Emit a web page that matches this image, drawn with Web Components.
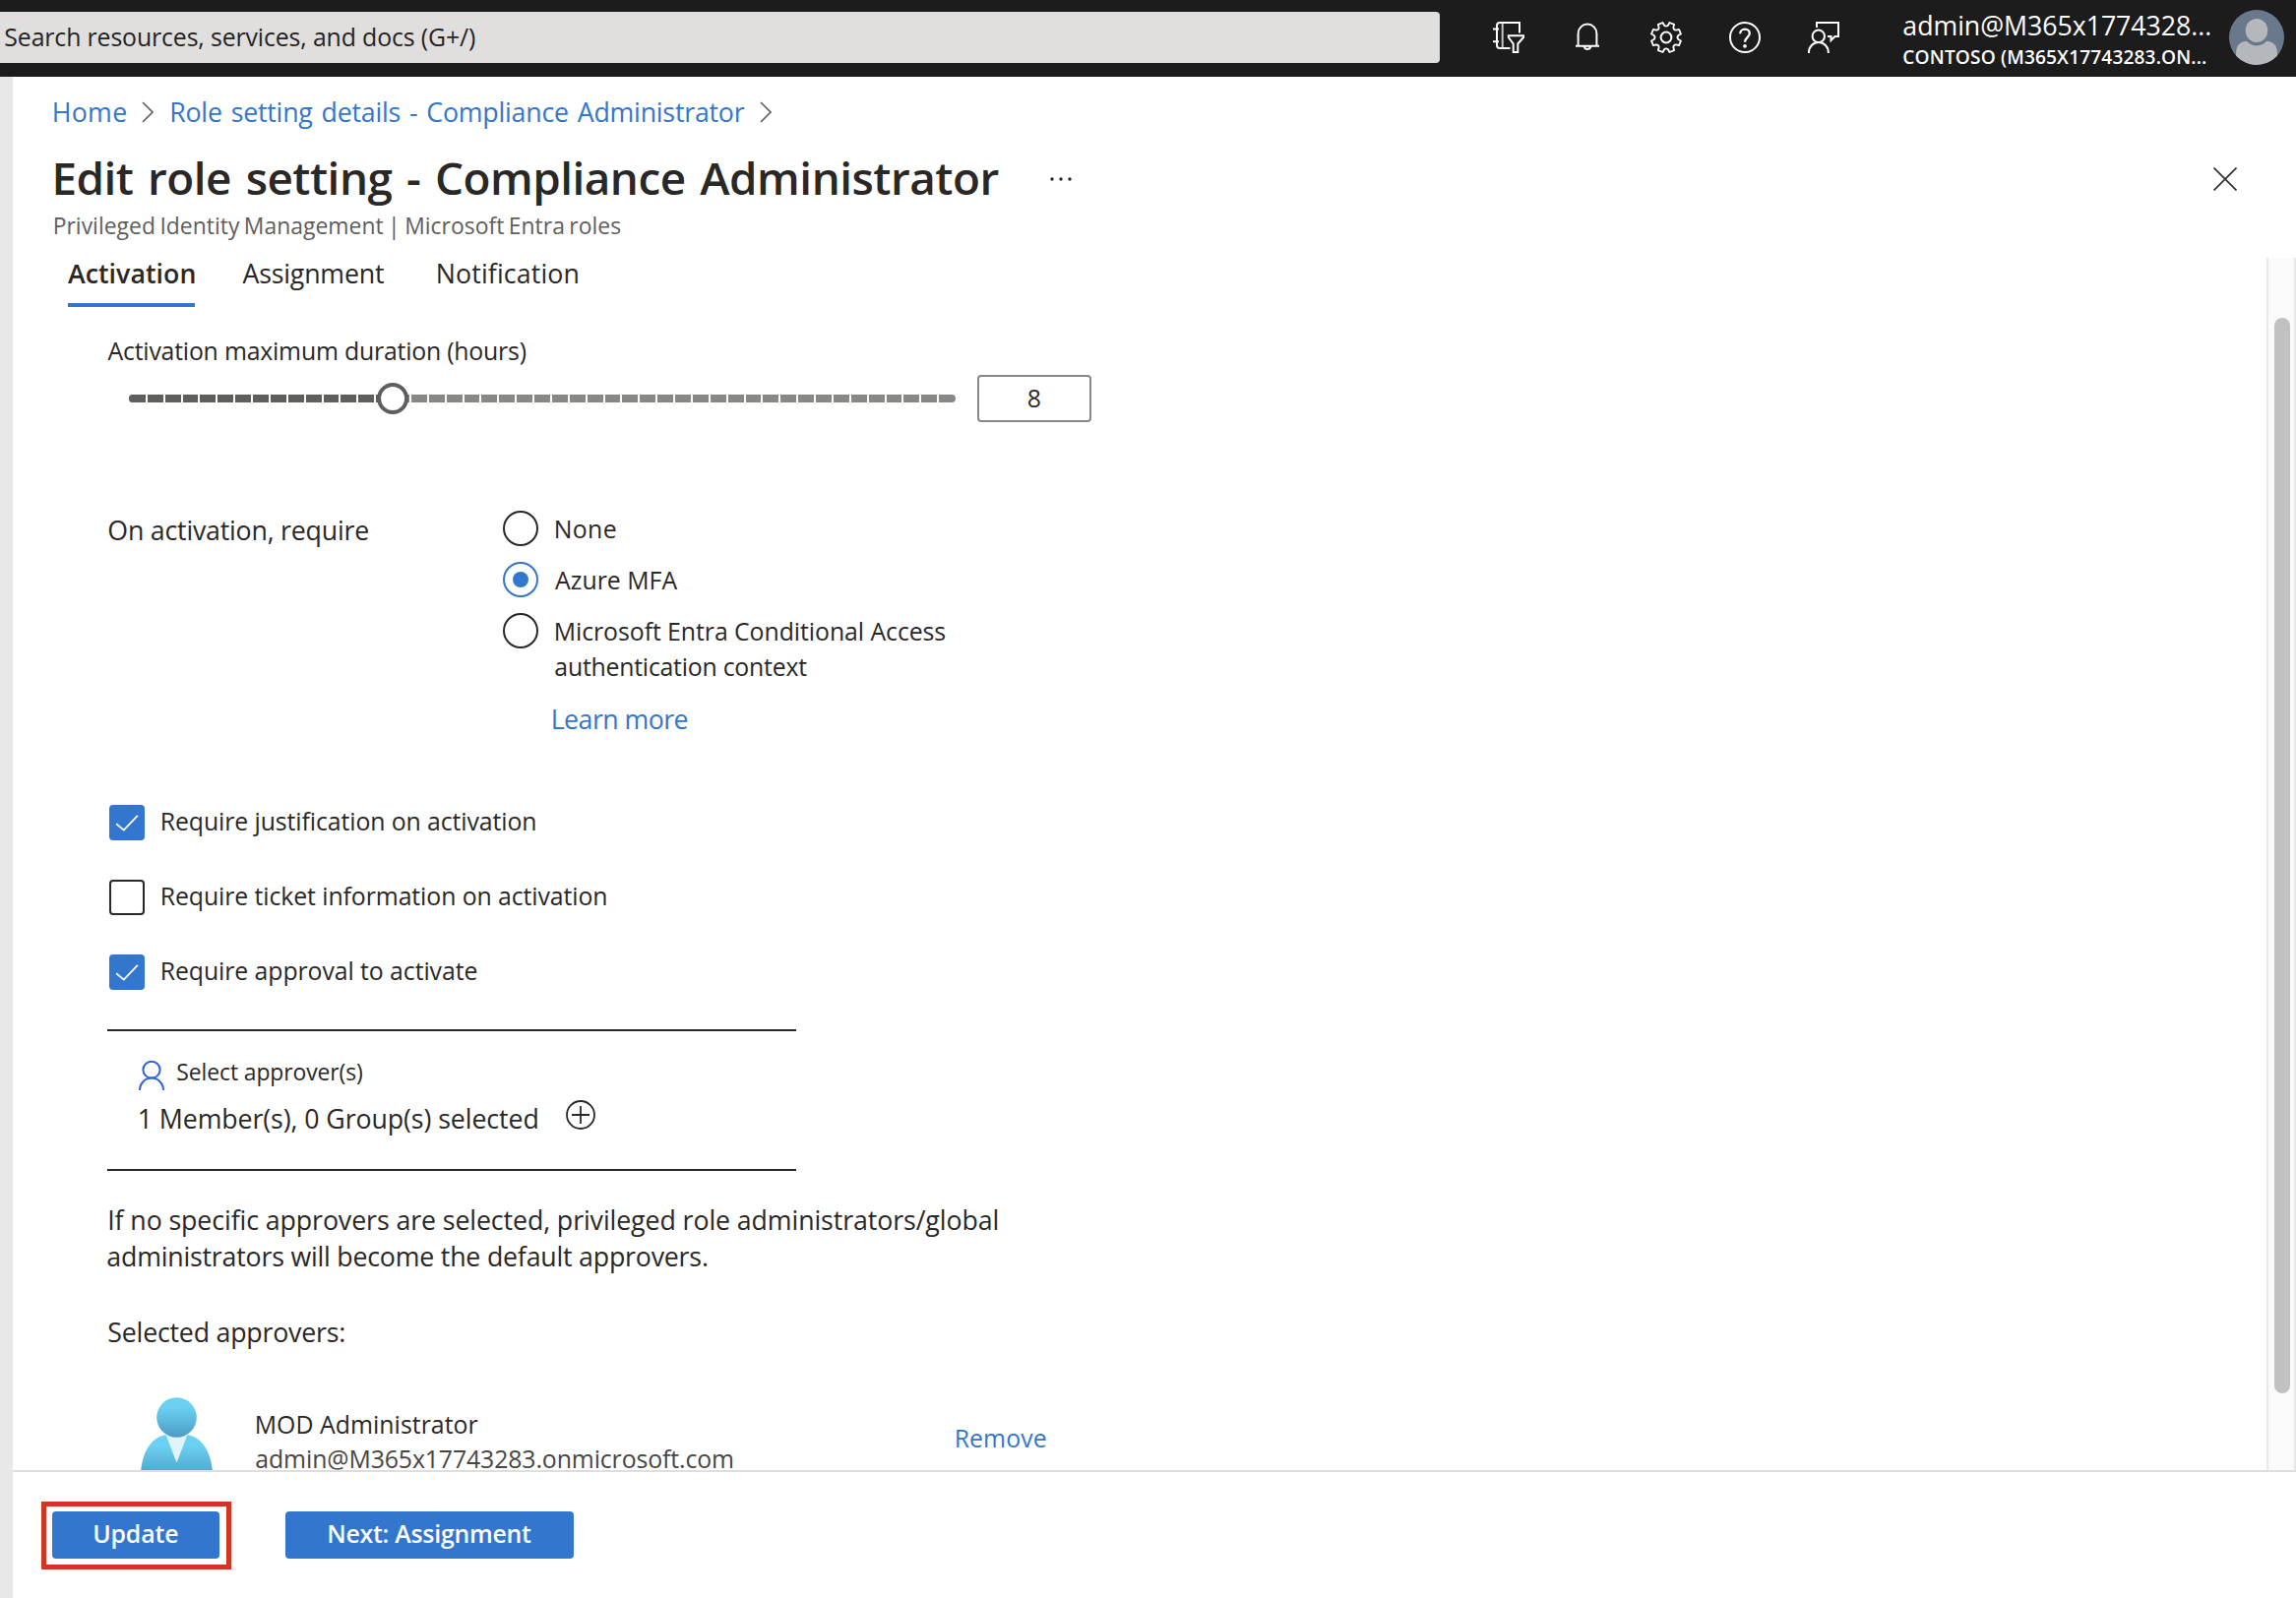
<!DOCTYPE html>
<html lang="en">
<head>
<meta charset="utf-8">
<title>Edit role setting - Compliance Administrator</title>
<style>
html,body{margin:0;padding:0;background:#fff}
body{width:2333px;height:1624px;overflow:hidden;font-family:"Open Sans","Noto Sans",sans-serif;color:#292827}
</style>
</head>
<body>
<role-settings-page></role-settings-page>
<script>
const define = (name, html, init) => {
  const tpl = document.createElement('template');
  tpl.innerHTML = html;
  customElements.define(name, class extends HTMLElement {
    connectedCallback() {
      if (this.shadowRoot) return;
      const root = this.attachShadow({ mode: 'open' });
      root.appendChild(tpl.content.cloneNode(true));
      if (init) init(this, root);
    }
  });
};

/* A line of text set to an exact ink width: s = size, w = width, h = line height, b = weight, ws = extra word space */
const pen = document.createElement('canvas').getContext('2d');
define('fit-text', `<style>:host{display:block;white-space:pre;flex:none}span{display:block}</style><span><slot></slot></span>`, (el, root) => {
  const size = (+el.getAttribute('s') * 0.955).toFixed(2);
  const weight = el.getAttribute('b') || 400;
  const w = +el.getAttribute('w');
  const ws = +(el.getAttribute('ws') || 0);
  const text = el.textContent;
  const spaces = text.split(' ').length - 1;
  pen.font = `${weight} ${size}px "Open Sans","Noto Sans",sans-serif`;
  pen.letterSpacing = '0.01px';
  const m = pen.measureText(text);
  const ink = m.actualBoundingBoxLeft + m.actualBoundingBoxRight;
  const ls = text.length > 1 ? (w - ink - ws * spaces) / (text.length - 1) : 0;
  el.style.width = w + 'px';
  const span = root.querySelector('span');
  span.style.cssText = `font-size:${size}px;font-weight:${weight};line-height:${el.getAttribute('h') || 40}px;letter-spacing:${ls.toFixed(4)}px;word-spacing:${ws}px;margin-left:${(m.actualBoundingBoxLeft * 0.65).toFixed(2)}px`;
});

const polar = (r, deg) => {
  const a = deg * Math.PI / 180;
  return (16 + r * Math.sin(a)).toFixed(2) + ' ' + (16 - r * Math.cos(a)).toFixed(2);
};
let gear = '';
for (let a = 0; a < 360; a += 45) {
  gear += `${a ? 'L' : 'M'}${polar(15.4, a - 13)}L${polar(12.4, a - 9)}Q${polar(10.6, a)} ${polar(12.4, a + 9)}L${polar(15.4, a + 13)}L${polar(15.4, a + 32)}`;
}
const ICONS = {
  filter: '<path d="M27 11.5V1H7Q4 1 4 4V24Q4 27 7 27H17.5M0 7.5H6M0 20.2H6"/><path d="M9.7 1V27" opacity=".75"/><path d="M15.8 14.3H31V16L25.3 22.5V31H20.7V22.5L15.8 16Z"/>',
  bell: '<path d="M4 24.8H28M6.6 24.8V12A9.4 9.4 0 0 1 25.4 12V24.8M12.8 25.5A3.3 3.3 0 0 0 19.2 25.5"/>',
  gear: `<path d="${gear}Z" stroke-linejoin="round" stroke-width="1.8"/><circle cx="16" cy="16" r="5.4"/>`,
  help: '<circle cx="16" cy="16" r="15"/><path d="M11.2 12.3C11.2 9.6 13.2 7.7 16 7.7S20.8 9.6 20.8 12.1C20.8 15.6 16 16.3 16 20.8" stroke-width="2.3"/><circle cx="16" cy="24.8" r="1.9" fill="currentColor" stroke="none"/>',
  feedback: '<circle cx="10.8" cy="14.8" r="6.2"/><path d="M1 32V31A9.9 10 0 0 1 20.8 31V32M9 6V1H31V15H27.5L23.5 19V15H20"/>'
};
define('portal-icon', `<style>:host{display:block;width:32px;height:32px;color:#fff;flex:none}svg{display:block;overflow:visible}</style>
<svg width="32" height="32" fill="none" stroke="currentColor" stroke-width="2"></svg>`, (el, root) => {
  root.querySelector('svg').innerHTML = ICONS[el.getAttribute('name')];
});

define('portal-header', `<style>
:host{display:flex;height:78px;background:#1c1c1c;color:#fff;flex:none}
.search{width:1463px;height:52px;margin-top:12px;box-sizing:border-box;padding-left:5px;background:#e0dfdd;color:#252423;border-radius:0 4px 4px 0}
.icons{display:flex;gap:48px;margin:22px 65px 0 54px}
.who{padding-top:6px;width:331px}
svg{display:block;margin-top:10px}
</style>
<div class="search"><fit-text s="26" w="478" h="50">Search resources, services, and docs (G+/)</fit-text></div>
<div class="icons"><portal-icon name="filter"></portal-icon><portal-icon name="bell"></portal-icon><portal-icon name="gear"></portal-icon><portal-icon name="help"></portal-icon><portal-icon name="feedback"></portal-icon></div>
<div class="who"><fit-text s="28" w="312" h="40">admin@M365x1774328...</fit-text><fit-text style="margin-top:-2px" s="20" w="307" h="28" b="600">CONTOSO (M365X17743283.ON...</fit-text></div>
<svg width="56" height="56"><defs><clipPath id="c"><circle cx="28" cy="28" r="28"/></clipPath></defs><g clip-path="url(#c)"><rect width="56" height="56" fill="#69788a"/><path d="M7 56V45Q7 33 16 32H40Q49 33 49 45V56Z" fill="#b4b8bd"/><ellipse cx="28" cy="21.5" rx="14" ry="15" fill="#69788a"/><ellipse cx="28" cy="21" rx="11.3" ry="12" fill="#b4b8bd"/></g></svg>`);

define('crumb-trail', `<style>:host{display:flex;align-items:center;color:#3376cd}svg{display:block;flex:none}</style>
<fit-text s="28" w="73.5">Home</fit-text>
<svg width="12" height="22" style="margin:0 18px 0 16px" fill="none" stroke="#605e5c" stroke-width="1.6"><path d="M1 1L11 11L1 21"/></svg>
<fit-text s="28" w="583" ws="2.2">Role setting details - Compliance Administrator</fit-text>
<svg width="12" height="22" style="margin:0 15px" fill="none" stroke="#605e5c" stroke-width="1.6"><path d="M1 1L11 11L1 21"/></svg>`);

define('blade-title', `<style>
:host{display:block}
.row{display:flex;align-items:center}
.dots{margin:4px auto 0 53px}
.x{margin:4px 60px 0 0}
.sub{color:#605e5c}
svg{display:block}
</style>
<div class="row"><fit-text s="48" w="958.5" h="60" b="600" ws="3.2">Edit role setting - Compliance Administrator</fit-text>
<svg class="dots" width="22" height="4" fill="#292827"><circle cx="2" cy="2" r="1.7"/><circle cx="11" cy="2" r="1.7"/><circle cx="20" cy="2" r="1.7"/></svg>
<svg class="x" width="24" height="24" stroke="#323130" stroke-width="1.7"><path d="M.5 .5L23.5 23.5M23.5 .5L.5 23.5"/></svg></div>
<div class="sub"><fit-text s="24" w="575" h="40" ws="-1.5">Privileged Identity Management | Microsoft Entra roles</fit-text></div>`);

define('blade-tab', `<style>:host{display:block;box-sizing:border-box;height:50px;border-bottom:4px solid transparent}:host([active]){border-color:#3376cd}</style><slot></slot>`);

define('duration-slider', `<style>
:host{display:flex;align-items:center;height:48px;margin-left:22px}
svg{display:block;flex:none;overflow:visible}
.box{margin-left:22px;width:116px;height:48px;box-sizing:border-box;border:2px solid #8a8886;border-radius:4px;display:flex;justify-content:center}
</style>
<svg width="840" height="32"></svg>
<div class="box"><fit-text s="26" w="13" h="43">8</fit-text></div>`, (el, root) => {
  const steps = 47, value = 15, pitch = 840 / steps;
  let out = '<rect y="12" width="840" height="8" rx="4" fill="#8a8886"/><path d="M268 12H4A4 4 0 0 0 4 20H268Z" fill="#605e5c"/>';
  for (let i = 1; i < steps; i++) out += `<rect x="${Math.round(i * pitch - 1)}" y="12" width="2" height="8" fill="#fff"/>`;
  out += `<circle cx="${(value * pitch).toFixed(1)}" cy="16" r="14" fill="#fff" stroke="#605e5c" stroke-width="4"/>`;
  root.querySelector('svg').innerHTML = out;
});

define('radio-option', `<style>
:host{display:flex;gap:17px;align-items:flex-start}
i{width:36px;height:36px;box-sizing:border-box;border:2px solid #292827;border-radius:50%;flex:none;display:flex;align-items:center;justify-content:center}
:host([checked]) i{border-color:#3376cd}
:host([checked]) i::after{content:"";width:16px;height:16px;border-radius:50%;background:#3376cd}
</style><i></i><div><slot></slot></div>`);

define('check-option', `<style>
:host{display:flex;gap:17px;align-items:flex-start;height:36px}
i{width:36px;height:36px;box-sizing:border-box;border:2px solid #292827;border-radius:4px;flex:none}
:host([checked]) i{border-color:#3376cd;background:#3376cd}
svg{display:none}
:host([checked]) svg{display:block}
</style><i><svg width="32" height="32" fill="none" stroke="#fff" stroke-width="1.8"><path d="M5.2 17.2L12.8 23.6L26.8 8.8"/></svg></i><slot></slot>`);

define('approver-picker', `<style>
:host{display:block;box-sizing:border-box;width:700px;height:144px;border:solid #292827;border-width:2px 0;padding:24px 0 0 32px}
div{display:flex}
.a{align-items:flex-end;gap:13px}
.b{margin-top:10px;gap:29px}
svg{display:block;flex:none}
</style>
<div class="a"><svg width="26" height="30" fill="none" stroke="#2b62d9" stroke-width="2"><ellipse cx="13" cy="9.2" rx="8.6" ry="8.4"/><path d="M1 30A12 12.4 0 0 1 25 30"/></svg><fit-text s="24" w="187.8" h="36">Select approver(s)</fit-text></div>
<div class="b"><fit-text s="28" w="405" h="38">1 Member(s), 0 Group(s) selected</fit-text><svg width="30" height="30" fill="none" stroke="#292827" stroke-width="1.8"><circle cx="15" cy="15" r="14"/><path d="M6 15H24M15 6V24"/></svg></div>`);

define('approver-row', `<style>
:host{display:flex;align-items:flex-start}
svg{display:block;flex:none;margin-left:33.5px}
.t{margin:10px 0 0 44.5px}
.m{color:#484644}
.r{color:#3376cd;margin:21px 0 0 227px}
</style>
<svg width="73" height="84"><defs><linearGradient id="h" x1="0" y1="0" x2="0" y2="1"><stop offset=".25" stop-color="#6bd0f1"/><stop offset="1" stop-color="#4b9bc5"/></linearGradient></defs>
<path d="M0 76C2 52 13 40 26 38H47C60 40 71 52 73 76V84H0Z" fill="url(#h)"/>
<path d="M25.5 38H47.5L36.5 66.5Z" fill="#e0f4fc"/><circle cx="36.5" cy="20.5" r="20.3" fill="url(#h)"/></svg>
<div class="t"><fit-text s="26" w="225" h="35">MOD Administrator</fit-text><fit-text class="m" s="26" w="484" h="35">admin@M365x17743283.onmicrosoft.com</fit-text></div>
<fit-text class="r" s="26" w="91">Remove</fit-text>`);

define('action-button', `<style>:host{display:flex;justify-content:center;height:48px;border-radius:4px;background:#3376cd;color:#fff;flex:none}</style><slot></slot>`);

define('action-bar', `<style>
:host{display:flex;align-items:flex-start;height:128px;border-top:2px solid #dedede;background:#fff;flex:none}
.mark{margin:30px 0 0 29px;border:5px solid #d13720;padding:5px 7px 6px 6px}
.next{width:293px;margin:40px 0 0 55px}
</style>
<div class="mark"><action-button style="width:170px"><fit-text s="26" w="85" h="44" b="600">Update</fit-text></action-button></div>
<action-button class="next"><fit-text s="26" w="206" h="44" b="600">Next: Assignment</fit-text></action-button>`);

define('settings-form', `<style>
:host{display:block;flex:1;min-width:0;padding-top:14px}
.tabs{display:flex;padding-left:56px}
.body{padding-left:96px}
.req{display:flex;align-items:flex-start;margin-top:89px}
.req>div{display:flex;flex-direction:column;gap:16px;margin:1px 0 0 137px}
.link{color:#3376cd;margin-left:50px}
.checks{display:flex;flex-direction:column;gap:40px;margin:67px 0 40px 2px}
</style>
<div class="tabs"><blade-tab active><fit-text s="28" w="128.5" h="32" b="600">Activation</fit-text></blade-tab>
<blade-tab style="margin-left:49px"><fit-text s="28" w="143.5" h="32">Assignment</fit-text></blade-tab>
<blade-tab style="margin-left:54px"><fit-text s="28" w="143" h="32">Notification</fit-text></blade-tab></div>
<div class="body">
<fit-text style="margin:24px 0 5px .5px" s="26" w="425.5">Activation maximum duration (hours)</fit-text>
<duration-slider></duration-slider>
<div class="req"><fit-text style="margin-left:1px" s="28" w="264" h="42">On activation, require</fit-text>
<div>
<radio-option><fit-text s="26" w="61" h="36">None</fit-text></radio-option>
<radio-option checked><fit-text s="26" w="124.5" h="36">Azure MFA</fit-text></radio-option>
<radio-option><fit-text s="26" w="396" h="36">Microsoft Entra Conditional Access</fit-text><fit-text s="26" w="256" h="36">authentication context</fit-text></radio-option>
<fit-text class="link" s="28" w="137" h="40">Learn more</fit-text>
</div></div>
<div class="checks">
<check-option checked><fit-text s="26" w="380" h="32">Require justification on activation</fit-text></check-option>
<check-option><fit-text s="26" w="452" h="32">Require ticket information on activation</fit-text></check-option>
<check-option checked><fit-text s="26" w="320" h="32">Require approval to activate</fit-text></check-option>
</div>
<approver-picker></approver-picker>
<fit-text style="margin:31px 0 0 1.5px" s="28" w="903" h="37">If no specific approvers are selected, privileged role administrators/global</fit-text>
<fit-text s="28" w="610" h="37">administrators will become the default approvers.</fit-text>
<fit-text style="margin:38.5px 0 46.5px 1px" s="28" w="240">Selected approvers:</fit-text>
<approver-row></approver-row>
</div>`);

define('scroll-rail', `<style>
:host{display:flex;justify-content:center;box-sizing:border-box;width:30px;flex:none;margin-top:14px;background:#fafafa;border:solid #e8e8e8;border-width:0 2px;padding-top:61px}
i{display:block;width:16px;height:1093px;border-radius:8px;background:#c1c1c1;margin-left:2px}
</style><i></i>`);

define('role-settings-page', `<style>
:host{display:flex;flex-direction:column;width:2333px;height:1624px;background:#fff}
.shell{display:flex;flex:1;min-height:0}
.edge{width:13px;background:#e8e8e8;flex:none}
.blade{flex:1;min-width:0;display:flex;flex-direction:column}
crumb-trail{margin:16px 0 0 41px}
blade-title{margin:16px 0 -2px 42px}
.view{display:flex;height:1246px;overflow:hidden;flex:none}
</style>
<portal-header></portal-header>
<div class="shell"><div class="edge"></div>
<div class="blade"><crumb-trail></crumb-trail><blade-title></blade-title>
<div class="view"><settings-form></settings-form><scroll-rail></scroll-rail></div>
<action-bar></action-bar></div></div>`);
</script>
</body>
</html>
